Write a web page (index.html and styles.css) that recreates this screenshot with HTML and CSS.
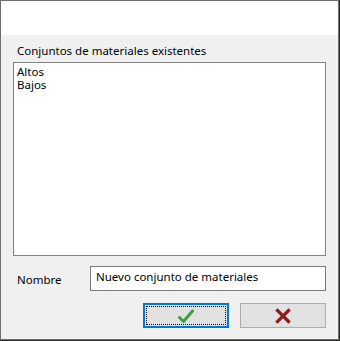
FILE: index.html
```html
<!DOCTYPE html>
<html lang="es">
<head>
    <meta charset="UTF-8">
    <title>Conjuntos de materiales</title>
    <link rel="stylesheet" href="styles.css">
</head>
<body>
    <div class="window">
        <div class="titlebar"></div>
        <div class="content">
            <div class="caption">Conjuntos de materiales existentes</div>
            <div class="listbox">
                <div class="item">Altos</div>
                <div class="item">Bajos</div>
            </div>
            <div class="name-row">
                <span class="name-label">Nombre</span>
                <div class="textbox">Nuevo conjunto de materiales</div>
            </div>
            <div class="buttons">
                <button class="btn btn-ok">
                    <span class="focus">
                        <svg width="16" height="16" viewBox="0 0 16 16">
                            <path d="M1.5 9.5 L5.5 13.5 L14.5 3" fill="none" stroke="#3f9e3f" stroke-width="3" stroke-linecap="round" stroke-linejoin="round"/>
                        </svg>
                    </span>
                </button>
                <button class="btn btn-cancel">
                    <svg width="16" height="16" viewBox="0 0 16 16">
                        <path d="M2.5 2.5 L13.5 13.5 M13.5 2.5 L2.5 13.5" fill="none" stroke="#8e1b1b" stroke-width="3.2" stroke-linecap="square"/>
                    </svg>
                </button>
            </div>
        </div>
    </div>
</body>
</html>
```

FILE: styles.css
```css
* {
    box-sizing: border-box;
}
body {
    margin: 0;
    background: #2f2f2a;
    font-family: "Noto Sans", "Open Sans", sans-serif;
    font-size: 11.5px;
    color: #000;
}
.window {
    width: 339px;
    height: 340px;
    border: 1px solid #6e6e6e;
    background: #f0f0f0;
    display: flex;
    flex-direction: column;
}
.titlebar {
    height: 34px;
    background: #ffffff;
}
.content {
    padding: 8px 12px 0 12px;
    display: flex;
    flex-direction: column;
}
.caption {
    height: 19px;
    line-height: 16px;
    padding-left: 4px;
}
.listbox {
    width: 313px;
    height: 194px;
    border: 1px solid #828282;
    background: #ffffff;
    padding: 2px 3px;
}
.item {
    line-height: 13px;
    height: 13px;
}
.name-row {
    display: flex;
    align-items: center;
    margin-top: 10px;
}
.name-label {
    width: 77px;
    padding-left: 4px;
    padding-top: 2px;
}
.textbox {
    width: 236px;
    height: 25px;
    border: 1px solid #7a7a7a;
    background: #ffffff;
    padding-left: 5px;
    line-height: 19px;
}
.buttons {
    display: flex;
    justify-content: flex-end;
    gap: 11px;
    margin-top: 12px;
    padding-right: 0;
    width: 313px;
}
.btn {
    width: 86px;
    height: 25px;
    background: #e1e1e1;
    padding: 0;
    margin: 0;
    display: flex;
    align-items: center;
    justify-content: center;
}
.btn-ok {
    border: 2px solid #0078d7;
}
.btn-ok .focus {
    width: 80px;
    height: 19px;
    border: 1px dotted #000;
    display: flex;
    align-items: center;
    justify-content: center;
}
.btn-cancel {
    border: 1px solid #adadad;
}
```
